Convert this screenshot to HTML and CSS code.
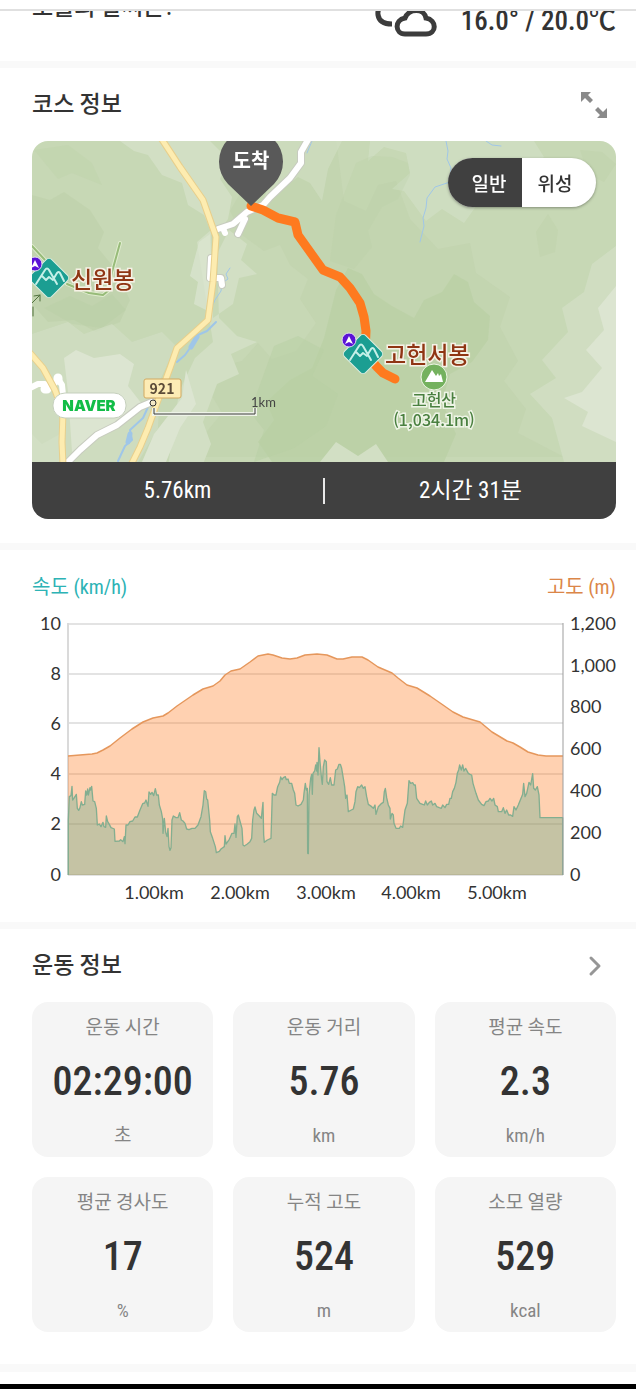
FILE: index.html
```html
<!DOCTYPE html>
<html lang="ko">
<head>
<meta charset="utf-8">
<meta name="viewport" content="width=device-width, initial-scale=1">
<title>코스 정보</title>
<link rel="stylesheet" href="styles.css">
</head>
<body>
<header class="topbar"></header>
<main>
<section class="weather">
  <h2 class="weather-title">오늘의 날씨는?</h2>
  <div class="weather-now">
    <svg class="weather-icon" width="62" height="38" viewBox="0 0 62 38" fill="none" stroke="#3c3c3c" stroke-width="5" aria-hidden="true">
      <path d="M18 5C9 2 2 8 3 16c1 6 5 9 14 9"/>
      <path d="M30 35h21c11 0 11-14 0-16C49 9 34 9 30 19c-11 2-10 16 0 16z"/>
    </svg>
    <span class="temps">16.0° / 20.0℃</span>
  </div>
</section>

<section class="course">
  <div class="section-head">
    <h2>코스 정보</h2>
    <button class="icon-button" type="button" aria-label="지도 확대">
      <svg width="28" height="28" viewBox="0 0 28 28" aria-hidden="true">
        <path d="M1 1h10L8 4l5 5-3 3-5-5-4 4z" fill="#8a8a8a"/>
        <path d="M27 27H17l3-3-5-5 3-3 5 5 4-4z" fill="#8a8a8a"/>
      </svg>
    </button>
  </div>
  <div class="map-card">
    <div class="map">
      <svg class="map-canvas" viewBox="32 141 584 321" preserveAspectRatio="xMidYMid slice" role="img" aria-label="코스 지도">
        <rect x="32" y="141" width="584" height="321" fill="#c7d8b5"/>
        <g fill="#bfd2ab">
          <path d="M32 195l18 5 14-8 26 18 14 22-6 16 18 22 14 30-10 22-24 10-22-12-26 2-16-18z" opacity=".7"/>
          <path d="M226 141l16 20 4 22-16 28 12 24 22 16 16-6 10 20 18 14-8 20 16 24-20 28-24 8-14-16-16 18-24 6-10 22 14 24-18 22-10 22h370l-46-24 8-24-22-28 14-20-18-34 10-30-34-24-6-30-32 6-28-30-14-38-18 4-12 26-22-10-8-62z" opacity=".5"/>
        </g>
        <g fill="#b8cfa3">
          <path d="M336 290l12-22 14 6 12 20 18 12 22 12 10-18 18-8 12-18 14 8 6 20 16 14-2 24-16 22-22 12-8 28 14 32-12 28H272l-14-20 16-22-8-18 24-22 22-12 12-30z" opacity=".65"/>
          <path d="M274 346l24-10 26 14-12 26 26 18-12 32-32 22-40 14 10-32-14-18z" opacity=".5"/>
          <path d="M44 308l26-12 22 10 20-12 14 16-24 18-30-4z" opacity=".35"/>
        </g>
        <g fill="#d2dfc4">
          <path d="M120 141h90l18 18-8 20 12 18-4 22-14 20-10-24-16-10-6-22-20-8-14-20-14-4z"/>
          <path d="M370 141h164l10 16-24 28-36 10-20 28-22-14-16 12-22-30-12-2 18-16-4-20-22-6-16 14z" opacity=".7"/>
          <path d="M274 141h68l-14 28-6 32-12-18-12-6-16 12-18 10 12-38z" opacity=".6"/>
          <path d="M197 242l14-12 2 88 20-14 6-26 18-4-16-14 6-16-18-14-12 24 2 64 18 18 20 6-26 12 8 20-22 10-14 38 8 22-12 30h-32l12-82 16-34 18-16z"/>
          <path d="M32 334l36-12 16 12 28-10 20 18 30-10 14 14-16 34-2 48-20 34H32z" opacity=".65"/>
          <path d="M616 246l-24 18-8 28-22 16 6 24-26 28 14 18-26 16 22 24 12 44h52z" opacity=".8"/>
          <path d="M32 462v-28l10 10 18-10 4 28zM320 462l16-20 22 14 18-12 12 18z"/>
        </g>
        <g fill="#dce5d1">
          <path d="M616 286l-18 22 6 22-18 20 16 18-20 24-18 6 24 14-6 14 34 16z"/>
          <path d="M64 358l12-8 18 8 26-4 14 10-6 22 14 18-24 20-32 16-14 12-4-60zM186 370l-4 28-28 36-12 28h24l14-34 16-24z"/>
          <path d="M199 242l11-8 2 42-6 34-12-6 4-22-8-6z" opacity=".7"/>
        </g>
        <g fill="#bacfa4" opacity=".5">
          <path d="M356 163l16-7 20 1 16 6 2 12-12 24-16 8-14 24 4 16-18 22-24-8 6-46z" opacity=".5"/>
          <path d="M536 232l12-18 10 16-3 22-15 5zM580 150l22 2 14 12-12 18-16-8z" opacity=".6"/>
          <path d="M34 150l34-5 24 18 10 22-30-12-14 6z" opacity=".5"/>
        </g>

        <g fill="none" stroke="#9fc6e8" stroke-linecap="round" stroke-linejoin="round">
          <path d="M230 268l-4 6 2 5-6 4-1 8-6 9-3 7M446 141l2 10-1 8 4 9-1 14-15 5-8 11-1 10-3 10 1 8-4 16M486 141l6 4 9 1M312 141l-5 12" stroke-width="1"/>
          <path d="M216 322l-9 9-9 4-8 13-5 7-8 7M148 407l-5 11-13 12 2 10-7 6-7 15" stroke-width="2"/>
          <path d="M197 337l-6 10M130 434l-2 8" stroke-width="5"/>
        </g>
        <g fill="none" stroke-linejoin="round" stroke-linecap="round">
          <g stroke="#c7cbbf" stroke-width="8">
            <path d="M309 138l-8 14v11l-11 15-20 19-7 8-16 7-14 12-15 5M245 219l-7 15M211 258l-1 20 11 0 1 7M152 402l-12 5-23 18-20 10-17 15-13 13"/>
          </g>
          <g stroke="#fff" stroke-width="6">
            <path d="M309 138l-8 14v11l-11 15-20 19-7 8-16 7-14 12-15 5M245 219l-7 15M223 228l2 5M211 258l-1 20 11 0 1 7M30 388l8-4 7 0 2 6 6-5 5-6 4 6 1 10M152 402l-12 5-23 18-20 10-17 15-13 13"/>
            <path d="M45 389h2M58 378v2" stroke-width="9"/>
          </g>
          <g stroke="#e8cf8c" stroke-width="7">
            <path id="road-a" d="M161 138l19 29 23 33 13 37-3 45-5 38-11 10-20 18-7 20-13 35-9 25-8 19-9 18"/>
            <path id="road-b" d="M30 353l13 15 12 22 8 22-1 30 1 23"/>
          </g>
          <g stroke="#fdecb0" stroke-width="5">
            <use href="#road-a"/><use href="#road-b"/>
          </g>
          <path d="M32 246l13 14M67 284l22 9 14 2 6-5 3-18 8-29" stroke="#e0edce" stroke-width="4"/>
          <path d="M32 246l13 14M67 284l22 9 14 2 6-5 3-18 8-29" stroke="#97bb79" stroke-width="2"/>
          <path d="M32 303l8-8m-6 1l6-1v6M33 307v9" stroke="#50713d" stroke-width="1"/>
          <path d="M251 206l12 4 15 8 17 4 3 13 25 35 17 7 10 11 10 15 4 14 2 14-1 22 12 14 6 6 12 6" stroke="#fe7a1f" stroke-width="9"/>
        </g>

        <defs>
          <g id="peak">
            <rect x="-15" y="-15" width="30" height="30" rx="4" transform="rotate(45)" fill="#1b9e92" stroke="#d9ece0" stroke-width="1"/>
            <path d="M-13 6L-4-8q2-3 4 0L8 6M-7-2l4 4 3-3 4 3M5 0l3-5q2-2 3 0l4 8" fill="none" stroke="#c5f0e8" stroke-width="2" stroke-linecap="round" stroke-linejoin="round"/>
            <circle cx="-14" cy="-14" r="7" fill="#5a13d6" stroke="#e2def0" stroke-width="1"/>
            <path d="M-14-18l4 8-4-2-4 2z" fill="#fff"/>
          </g>
        </defs>
        <use href="#peak" x="49" y="278"/>
        <use href="#peak" x="363" y="354"/>
        <text class="map-peak" x="71" y="288">신원봉</text>
        <text class="map-peak" x="385" y="363">고헌서봉</text>

        <circle cx="434" cy="377" r="13" fill="#74b15e" stroke="#edf5e4" stroke-width="1"/>
        <path d="M425 382l7-12 4 6 2-3 1 3 2-2 2 8z" fill="#fff"/>
        <text class="map-mountain" x="434" y="406">고헌산</text>
        <text class="map-mountain" x="434" y="426">(1,034.1m)</text>

        <path d="M251 206L228 184A32 32 0 1 1 274 184z" fill="#595959"/>
        <text class="map-pin" x="251" y="168">도착</text>

        <rect x="144" y="379" width="37" height="19" rx="2" fill="#fdecb5" stroke="#d2a961"/>
        <text class="map-road" x="162" y="394">921</text>
        <rect x="53" y="393" width="73" height="25" rx="12" fill="#fff" stroke="#c5cfbd"/>
        <text class="map-brand" x="89" y="411">NAVER</text>

        <path d="M154 408v6h101v-6" fill="none" stroke="#eef3e8" stroke-width="4"/>
        <path d="M154 408v6h101v-6" fill="none" stroke="#3d3d3d" stroke-width="1"/>
        <circle cx="153" cy="403" r="3" fill="#f4e9c6" stroke="#333"/>
        <text class="map-scale" x="251" y="407">1km</text>
      </svg>
      <div class="map-toggle" role="group" aria-label="지도 유형">
        <button class="is-active" type="button">일반</button>
        <button type="button">위성</button>
      </div>
    </div>
    <div class="map-summary">
      <span>5.76km</span>
      <span>2시간 31분</span>
    </div>
  </div>
</section>

<section class="graph">
  <div class="legend">
    <span class="legend-speed">속도 (km/h)</span>
    <span class="legend-altitude">고도 (m)</span>
  </div>
  <svg class="chart" viewBox="32 610 584 295" role="img" aria-label="속도와 고도 그래프">
    <path d="M68 624h495M68 674h495M68 723h495M68 774h495M68 824h495M68 875h495" stroke="#e3e3e3" stroke-width="2"/>
    <path d="M68 623v252" stroke="#dadada" stroke-width="2"/>
    <path d="M68 756L80 755L92 754L97 753L103 750L110 746L120 738L132 729L143 722L153 718L163 716L168 713L177 706L193 695L203 689L213 686L220 681L225 675L231 671L240 669L250 662L258 656L263 655L268 654L273 655L282 658L290 659L297 658L305 655L317 654L327 655L337 659L343 659L352 657L362 657L368 660L378 667L392 673L398 678L407 685L417 688L430 696L443 705L453 712L463 717L480 722L492 732L507 741L513 743L520 747L528 752L538 755L546 756H563V875H68z" fill="#ff7a1f" fill-opacity=".35"/>
    <path d="M68 756L80 755L92 754L97 753L103 750L110 746L120 738L132 729L143 722L153 718L163 716L168 713L177 706L193 695L203 689L213 686L220 681L225 675L231 671L240 669L250 662L258 656L263 655L268 654L273 655L282 658L290 659L297 658L305 655L317 654L327 655L337 659L343 659L352 657L362 657L368 660L378 667L392 673L398 678L407 685L417 688L430 696L443 705L453 712L463 717L480 722L492 732L507 741L513 743L520 747L528 752L538 755L546 756H563" fill="none" stroke="#e5975c" stroke-width="1.5" stroke-linejoin="round"/>
    <g transform="translate(20 745) scale(.33333)">
      <path d="M145 390L145 225L148 155 153 152 156 124 158 165 163 158 169 148 172 190 176 196 180 188 184 170 187 180 194 178 197 138 200 150 203 132 205 150 210 128 212 135 215 124 219 168 224 170 229 190 232 240 238 237 243 245 249 232 252 245 257 247 259 213 263 230 268 238 273 248 283 252 285 289 298 288 302 284 309 290 313 275 315 296 318 240 324 240 330 230 338 228 345 216 352 216 360 195 368 176 374 174 378 165 384 184 387 141 392 148 396 142 401 152 406 131 410 150 415 150 418 180 424 200 428 222 429 265 433 220 437 262 441 275 444 250 447 305 450 316 453 308 456 225 460 213 468 218 474 218 479 203 484 225 489 228 495 235 500 252 507 254 516 250 525 250 534 240 543 215 549 180 553 137 557 140 560 162 563 165 569 225 571 260 578 280 586 305 589 323 598 319 603 312 613 305 615 272 618 297 628 283 636 265 642 265 645 237 648 277 652 215 655 210 659 225 666 250 669 300 673 303 682 297 690 290 695 280 698 225 702 195 705 186 710 205 718 213 724 220 729 172 731 270 733 292 742 285 753 280 757 145 762 150 768 150 773 125 779 112 782 96 786 104 790 98 796 95 799 104 804 102 808 115 815 115 820 135 824 145 828 180 834 183 843 178 850 165 852 145 856 115 859 135 862 130 863 325 865 326 867 150 872 100 875 88 877 148 879 85 884 78 887 60 890 78 891 52 894 90 897 8 900 50 905 105 907 118 910 65 914 45 919 50 921 110 926 118 931 98 935 120 942 120 947 75 952 72 957 58 961 58 965 70 970 100 974 125 977 160 981 150 985 200 994 195 1000 192 1005 170 1008 140 1013 125 1018 128 1025 120 1030 130 1035 125 1040 155 1045 178 1055 185 1060 190 1065 180 1068 208 1075 185 1085 175 1090 172 1093 140 1096 130 1100 158 1105 180 1110 190 1111 222 1116 205 1120 210 1122 235 1128 250 1138 250 1142 243 1148 247 1155 195 1162 175 1167 107 1172 115 1178 113 1182 120 1186 120 1190 160 1200 175 1208 178 1213 180 1217 168 1222 180 1228 172 1234 168 1238 180 1245 175 1250 185 1258 188 1264 190 1268 180 1275 188 1280 178 1286 178 1290 160 1294 160 1298 140 1303 130 1308 112 1312 85 1316 75 1319 60 1324 75 1328 60 1332 78 1337 70 1345 85 1350 88 1355 90 1359 115 1368 145 1375 165 1385 178 1392 182 1398 170 1405 168 1410 160 1416 168 1421 160 1425 180 1432 185 1435 200 1445 200 1450 188 1455 205 1460 195 1466 210 1472 210 1478 214 1482 185 1488 195 1495 180 1505 155 1508 148 1511 115 1515 155 1520 145 1527 112 1532 120 1538 86 1541 130 1546 135 1552 125 1557 150 1560 218 1628 218V390" fill="#5aa88c" fill-opacity=".35" stroke="#83ae90" stroke-width="4" stroke-linejoin="round"/>
    </g>
    <path d="M563 623v252" stroke="#9d9d9d" stroke-width="1"/>
    <g class="axis axis-left">
      <text x="61" y="630">10</text><text x="61" y="680">8</text><text x="61" y="730">6</text><text x="61" y="780">4</text><text x="61" y="830">2</text><text x="61" y="881">0</text>
    </g>
    <g class="axis">
      <text x="570" y="630">1,200</text><text x="570" y="672">1,000</text><text x="570" y="713">800</text><text x="570" y="755">600</text><text x="570" y="797">400</text><text x="570" y="839">200</text><text x="570" y="881">0</text>
    </g>
    <g class="axis axis-bottom">
      <text x="154" y="899">1.00km</text><text x="240" y="899">2.00km</text><text x="326" y="899">3.00km</text><text x="411" y="899">4.00km</text><text x="497" y="899">5.00km</text>
    </g>
  </svg>
</section>

<section class="workout">
  <div class="section-head">
    <h2>운동 정보</h2>
    <button class="icon-button" type="button" aria-label="운동 정보 더보기">
      <svg width="28" height="28" viewBox="0 0 28 28" aria-hidden="true">
        <path d="M11 6l8 8-8 8" fill="none" stroke="#969696" stroke-width="3" stroke-linecap="round" stroke-linejoin="round"/>
      </svg>
    </button>
  </div>
  <dl class="stats">
    <div class="stat"><dt>운동 시간</dt><dd class="value">02:29:00</dd><dd class="unit">초</dd></div>
    <div class="stat"><dt>운동 거리</dt><dd class="value">5.76</dd><dd class="unit">km</dd></div>
    <div class="stat"><dt>평균 속도</dt><dd class="value">2.3</dd><dd class="unit">km/h</dd></div>
    <div class="stat"><dt>평균 경사도</dt><dd class="value">17</dd><dd class="unit">%</dd></div>
    <div class="stat"><dt>누적 고도</dt><dd class="value">524</dd><dd class="unit">m</dd></div>
    <div class="stat"><dt>소모 열량</dt><dd class="value">529</dd><dd class="unit">kcal</dd></div>
  </dl>
</section>
</main>
<footer class="system-bar"></footer>
</body>
</html>
```

FILE: styles.css
```css
* { box-sizing: border-box; }

body {
  margin: 0;
  background: #fff;
  color: #333;
  font-family: "Roboto Condensed", "Liberation Sans Narrow", "Noto Sans CJK KR", sans-serif;
}

h2, dl, dt, dd { margin: 0; }

h2 {
  font-size: 23px;
  line-height: 32px;
  font-weight: 500;
}

button {
  border: 0;
  padding: 0;
  background: none;
  color: inherit;
  font: inherit;
  cursor: pointer;
}

.topbar {
  height: 11px;
  border-bottom: 2px solid #e0e0e0;
}

section {
  padding: 0 20px 0 32px;
  border-bottom: 7px solid #f9f9f9;
}

.weather {
  display: flex;
  justify-content: space-between;
  align-items: flex-start;
  height: 57px;
  overflow: hidden;
}

.weather-title { margin-top: -19px; }

.weather-now {
  display: flex;
  align-items: flex-end;
  gap: 24px;
  margin-top: -12px;
}

.temps {
  font-size: 27px;
  line-height: 32px;
  font-weight: 500;
}

.section-head {
  display: flex;
  justify-content: space-between;
  align-items: center;
  padding-right: 8px;
}

.icon-button, .icon-button svg { display: block; }

.course { padding-top: 21px; padding-bottom: 24px; }

.map-card {
  margin-top: 20px;
  border-radius: 16px;
  overflow: hidden;
}

.map { position: relative; height: 321px; }

.map-canvas { display: block; width: 100%; height: 100%; }

.map-canvas text { font-family: "Noto Sans CJK KR", sans-serif; }

.map-canvas .map-peak {
  font-size: 23px;
  font-weight: 500;
  fill: #8f3513;
  stroke: #f6f1e6;
  stroke-width: 3px;
  paint-order: stroke;
}

.map-canvas .map-mountain {
  font-size: 16px;
  font-weight: 500;
  text-anchor: middle;
  fill: #4a8040;
  stroke: #eef4e6;
  stroke-width: 3px;
  paint-order: stroke;
}

.map-canvas .map-pin {
  font-size: 20px;
  font-weight: 700;
  text-anchor: middle;
  fill: #fff;
}

.map-canvas .map-road {
  font-size: 14px;
  font-weight: 700;
  text-anchor: middle;
  fill: #5c4c39;
}

.map-canvas .map-brand {
  font-family: Inter, "Open Sans", sans-serif;
  font-size: 15px;
  font-weight: 900;
  text-anchor: middle;
  fill: #12bd47;
}

.map-canvas .map-scale {
  font-family: Lato, sans-serif;
  font-size: 13px;
  fill: #444;
}

.map-toggle {
  position: absolute;
  top: 17px;
  right: 20px;
  display: flex;
  width: 148px;
  height: 49px;
  border-radius: 25px;
  overflow: hidden;
  background: #fff;
  box-shadow: 0 1px 3px rgba(0, 0, 0, 0.35);
  font-family: "Noto Sans CJK KR", sans-serif;
  font-size: 19px;
  font-weight: 500;
}

.map-toggle button { flex: 1; padding-right: 8px; }

.map-toggle .is-active {
  padding: 0 0 0 8px;
  background: #404040;
  color: #fff;
}

.map-summary {
  position: relative;
  display: flex;
  align-items: center;
  height: 57px;
  background: #404040;
  color: #fff;
  font-size: 23px;
  line-height: 26px;
}

.map-summary span { flex: 1; text-align: center; }

.map-summary span + span { border-left: 2px solid #e8e8e8; }

.graph { padding-top: 22px; padding-bottom: 17px; }

.legend {
  display: flex;
  justify-content: space-between;
  font-size: 20px;
  line-height: 30px;
}

.legend-speed { color: #2db3b5; }
.legend-altitude { color: #db8648; }

.chart {
  display: block;
  width: 100%;
  margin-top: 8px;
  overflow: visible;
}

.axis {
  font-family: Lato, sans-serif;
  font-size: 18px;
  fill: #333;
}

.axis-left { text-anchor: end; }
.axis-bottom { text-anchor: middle; }

.workout {
  padding-top: 21px;
  padding-bottom: 32px;
  border-bottom-width: 8px;
}

.stats {
  display: grid;
  grid-template-columns: repeat(3, 1fr);
  gap: 20px;
  margin-top: 20px;
}

.stat {
  display: flex;
  flex-direction: column;
  align-items: center;
  padding: 12px 8px 7px;
  border-radius: 16px;
  background: #f5f5f5;
}

.stat dt, .unit {
  color: #858585;
  font-size: 19px;
  line-height: 28px;
}

.value {
  margin: 14px 0;
  font-size: 40px;
  line-height: 52px;
  font-weight: 500;
}

.system-bar {
  height: 5px;
  margin-top: 12px;
  background: #000;
}
```
